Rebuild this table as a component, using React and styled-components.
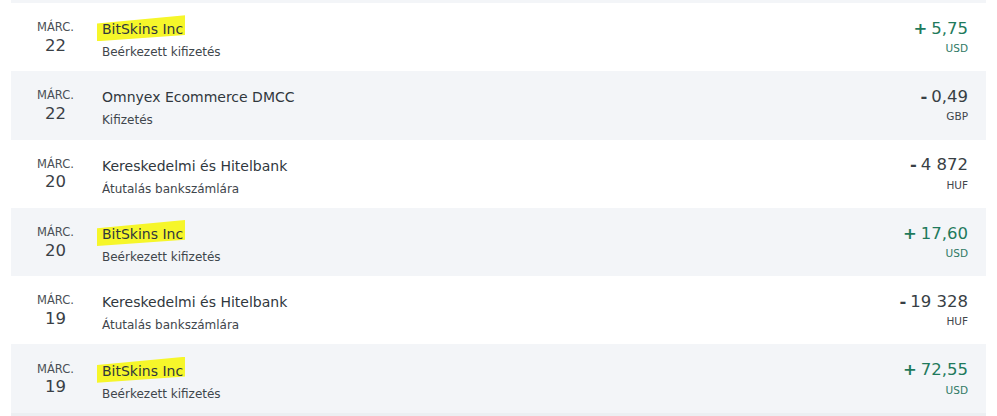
import styled, { createGlobalStyle } from "styled-components";

const GlobalStyle = createGlobalStyle`
    body {
        margin: 0;
        background: #ffffff;
        font-family: "DejaVu Sans", Verdana, sans-serif;
        color: #333b41;
    }
`;

const List = styled.div`
    margin: 0 11px;
    width: 975px;
    border-top: 3px solid #f3f5f8;
    border-bottom: 4px solid #eceff2;
`;

const Row = styled.div`
    display: flex;
    align-items: center;
    height: 68.3px;
    background: ${(p) => (p.$shaded ? "#f3f5f8" : "#ffffff")};
`;

const DateBox = styled.div`
    width: 91px;
    padding-right: 2px;
    box-sizing: border-box;
    display: flex;
    flex-direction: column;
    align-items: center;
    line-height: 1;
    margin-top: 2px;
    .month {
        font-size: 11.5px;
        color: #4a5056;
    }
    .day {
        font-size: 16.5px;
        margin-top: 4px;
        color: #3a4046;
    }
`;

const Details = styled.div`
    flex: 1;
    display: flex;
    flex-direction: column;
    gap: 10px;
    line-height: 1;
    margin-top: 6px;
`;

const Title = styled.div`
    font-size: 14px;
    color: #30373d;
`;

const Highlight = styled.span`
    display: inline-block;
    position: relative;
    z-index: 0;
    &::before {
        content: "";
        position: absolute;
        z-index: -1;
        left: -5px;
        right: -2px;
        top: -7px;
        bottom: -5px;
        background: #f6f62a;
        clip-path: polygon(0 32%, 100% 0, 100% 76%, 0 100%);
    }
`;

const Sub = styled.div`
    font-size: 12px;
    color: #3f464c;
`;

const Amount = styled.div`
    padding-right: 18px;
    display: flex;
    flex-direction: column;
    align-items: flex-end;
    gap: 6px;
    line-height: 1;
    color: ${(p) => (p.$positive ? "#1f7a5c" : "#383f45")};
    .value {
        font-size: 16.5px;
    }
    .sign {
        font-weight: bold;
        margin-right: 4px;
    }
    .currency {
        font-size: 10.5px;
        color: ${(p) => (p.$positive ? "#2f7a66" : "#3f464c")};
    }
`;

const items = [
    { day: "22", title: "BitSkins Inc", sub: "Beérkezett kifizetés", amount: "5,75", cur: "USD", pos: true, mark: true },
    { day: "22", title: "Omnyex Ecommerce DMCC", sub: "Kifizetés", amount: "0,49", cur: "GBP" },
    { day: "20", title: "Kereskedelmi és Hitelbank", sub: "Átutalás bankszámlára", amount: "4 872", cur: "HUF" },
    { day: "20", title: "BitSkins Inc", sub: "Beérkezett kifizetés", amount: "17,60", cur: "USD", pos: true, mark: true },
    { day: "19", title: "Kereskedelmi és Hitelbank", sub: "Átutalás bankszámlára", amount: "19 328", cur: "HUF" },
    { day: "19", title: "BitSkins Inc", sub: "Beérkezett kifizetés", amount: "72,55", cur: "USD", pos: true, mark: true },
];

export default function App() {
    return (
        <>
            <GlobalStyle />
            <List>
                {items.map((it, i) => (
                    <Row key={i} $shaded={i % 2 === 1}>
                        <DateBox>
                            <span className="month">MÁRC.</span>
                            <span className="day">{it.day}</span>
                        </DateBox>
                        <Details>
                            <Title>
                                {it.mark ? <Highlight>{it.title}</Highlight> : it.title}
                            </Title>
                            <Sub>{it.sub}</Sub>
                        </Details>
                        <Amount $positive={it.pos}>
                            <span className="value">
                                <span className="sign">{it.pos ? "+" : "-"}</span>
                                {it.amount}
                            </span>
                            <span className="currency">{it.cur}</span>
                        </Amount>
                    </Row>
                ))}
            </List>
        </>
    );
}
